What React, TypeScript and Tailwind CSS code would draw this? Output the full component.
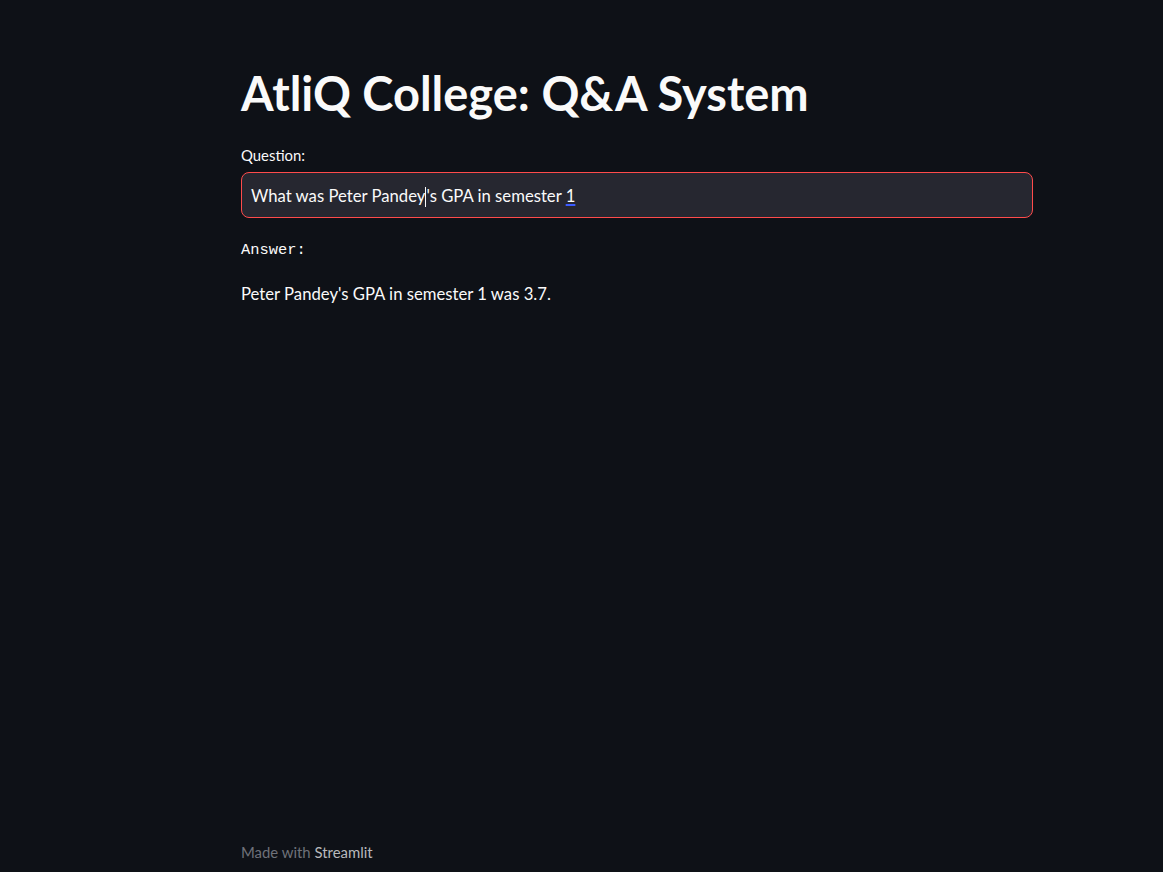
import React from "react";

export default function App() {
  const sans = "font-['Lato','Noto_Sans',sans-serif]";
  return (
    <div className={`min-h-screen bg-[#0e1117] text-[#fafafa] flex flex-col ${sans}`}>
      <main className="pl-[241px] pt-[65px]">
        <div className="w-[792px]">
          <h1 className="text-[47px] leading-[56px] font-bold">
            AtliQ College: Q&amp;A System
          </h1>
          <label className="block mt-[24px] text-[14.9px] leading-[20px]">Question:</label>
          <div className="mt-[7px] h-[46px] rounded-[8px] border border-[#ff4b4b] bg-[#262730] flex items-center pl-[9px] pt-[3px] text-[16.7px]">
            <span>What was Peter Pandey</span>
            <span className="inline-block w-px h-[20px] bg-[#fafafa]" />
            <span className="whitespace-pre">'s GPA in semester </span>
            <span className="underline decoration-[#3b5bff] decoration-2 underline-offset-2">1</span>
          </div>
          <div className="mt-[22px] font-['Liberation_Mono','DejaVu_Sans_Mono',monospace] text-[15.4px] leading-[20px]">
            Answer:
          </div>
          <p className="mt-[22px] text-[16.7px] leading-[24px]">Peter Pandey's GPA in semester 1 was 3.7.</p>
        </div>
      </main>
      <footer className="mt-auto pl-[241px] pb-[10px] text-[14.9px] leading-[20px] text-[#6f727a]">
        Made with <span className="text-[#b8b9bc]">Streamlit</span>
      </footer>
    </div>
  );
}
